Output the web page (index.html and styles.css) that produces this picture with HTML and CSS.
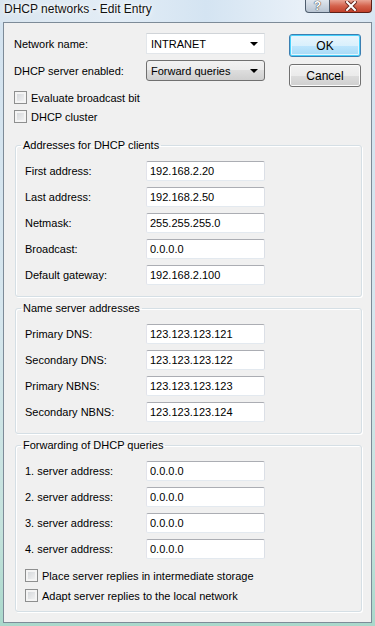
FILE: index.html
```html
<!DOCTYPE html>
<html lang="en">
  <head>
    <meta charset="UTF-8" />
    <title>DHCP networks - Edit Entry</title>
    <link rel="stylesheet" href="styles.css">
  </head>
  <body>
    <div class="window">
      <!-- Title bar -->
      <div class="titlebar">
        <span class="title">DHCP networks - Edit Entry</span>
        <div class="caption-btns">
          <span class="cap help">?</span>
          <span class="cap close">
            <svg width="12" height="10" viewBox="0 0 12 10">
              <path d="M2 1 L10 9 M10 1 L2 9" stroke="#6b2a20" stroke-width="4" stroke-linecap="square" />
              <path d="M2 1 L10 9 M10 1 L2 9" stroke="#fff" stroke-width="2" stroke-linecap="square" />
            </svg>
          </span>
        </div>
      </div>

      <!-- Dialog -->
      <div class="client">
        <div class="top">
          <div class="top-fields">
            <div class="row">
              <label class="lbl wide">Network name:</label>
              <div class="combo edit"><span>INTRANET</span><i class="arrow"></i></div>
            </div>
            <div class="row">
              <label class="lbl wide">DHCP server enabled:</label>
              <div class="combo list"><span>Forward queries</span><i class="arrow"></i></div>
            </div>
          </div>
          <div class="buttons">
            <button class="btn default">OK</button>
            <button class="btn">Cancel</button>
          </div>
        </div>

        <div class="checks">
          <div class="check"><span class="box"></span>Evaluate broadcast bit</div>
          <div class="check"><span class="box"></span>DHCP cluster</div>
        </div>

        <fieldset class="group first">
          <legend>Addresses for DHCP clients</legend>
          <div class="rows">
            <div class="row"><label class="lbl">First address:</label><input class="text" value="192.168.2.20" readonly></div>
            <div class="row"><label class="lbl">Last address:</label><input class="text" value="192.168.2.50" readonly></div>
            <div class="row"><label class="lbl">Netmask:</label><input class="text" value="255.255.255.0" readonly></div>
            <div class="row"><label class="lbl">Broadcast:</label><input class="text" value="0.0.0.0" readonly></div>
            <div class="row"><label class="lbl">Default gateway:</label><input class="text" value="192.168.2.100" readonly></div>
          </div>
        </fieldset>

        <fieldset class="group">
          <legend>Name server addresses</legend>
          <div class="rows">
            <div class="row"><label class="lbl">Primary DNS:</label><input class="text" value="123.123.123.121" readonly></div>
            <div class="row"><label class="lbl">Secondary DNS:</label><input class="text" value="123.123.123.122" readonly></div>
            <div class="row"><label class="lbl">Primary NBNS:</label><input class="text" value="123.123.123.123" readonly></div>
            <div class="row"><label class="lbl">Secondary NBNS:</label><input class="text" value="123.123.123.124" readonly></div>
          </div>
        </fieldset>

        <fieldset class="group last">
          <legend>Forwarding of DHCP queries</legend>
          <div class="rows">
            <div class="row"><label class="lbl">1. server address:</label><input class="text" value="0.0.0.0" readonly></div>
            <div class="row"><label class="lbl">2. server address:</label><input class="text" value="0.0.0.0" readonly></div>
            <div class="row"><label class="lbl">3. server address:</label><input class="text" value="0.0.0.0" readonly></div>
            <div class="row"><label class="lbl">4. server address:</label><input class="text" value="0.0.0.0" readonly></div>
          </div>
          <div class="checks inner">
            <div class="check"><span class="box"></span>Place server replies in intermediate storage</div>
            <div class="check"><span class="box"></span>Adapt server replies to the local network</div>
          </div>
        </fieldset>
      </div>
    </div>
  </body>
</html>
```

FILE: styles.css
```css
body {
  margin: 0;
  padding: 0;
  font-family: "Liberation Sans", Arial, sans-serif;
  font-size: 11px;
  color: #000;
}

/* Window frame */
.window {
  width: 375px;
  height: 626px;
  display: flex;
  flex-direction: column;
  background: linear-gradient(to bottom, #d4e3f0 0%, #d6e6ee 50%, #c4e2dc 85%, #a9d8cb 100%);
  overflow: hidden;
}

.titlebar {
  height: 22px;
  display: flex;
  align-items: flex-start;
  background: linear-gradient(to right, #d9e5ef 0%, #e3edf6 30%, #d4e4f2 55%, #e8f0f8 80%, #d8e6f2 100%);
}
.title {
  font-size: 12px;
  line-height: 19px;
  padding-left: 4px;
  color: #111;
  text-shadow: 0 0 6px #fff, 0 0 3px #fff;
}
.caption-btns {
  margin-left: auto;
  margin-right: 3px;
  display: flex;
}
.cap {
  height: 12px;
  border: 1px solid #4e5d6e;
  border-top: none;
  display: flex;
  align-items: center;
  justify-content: center;
}
.help {
  width: 23px;
  border-radius: 0 0 0 4px;
  background: linear-gradient(#dfe6ee, #b8c4d2);
  color: #fff;
  font-weight: bold;
  font-size: 12px;
  line-height: 12px;
  text-shadow: 0 0 1px #333, 0 0 1px #333;
}
.close {
  width: 41px;
  border-left: none;
  border-color: #5e1f16;
  border-radius: 0 0 4px 0;
  background: linear-gradient(#e9a595, #d4624c 50%, #c2402a);
}

/* Client area */
.client {
  flex: 1;
  margin: 0 3px 3px;
  border: 1px solid #7d8b98;
  background: #f0f0f0;
  padding: 10px 9px 0 10px;
}

.top {
  display: flex;
}
.top-fields {
  display: flex;
  flex-direction: column;
  gap: 6px;
}
.row {
  display: flex;
  align-items: center;
}
.lbl {
  width: 121px;
  flex-shrink: 0;
}
.lbl.wide {
  width: 132px;
}

.combo {
  width: 119px;
  height: 21px;
  box-sizing: border-box;
  display: flex;
  align-items: center;
  padding: 0 6px 0 4px;
}
.combo span {
  flex: 1;
}
.combo.edit {
  background: #fff;
  border: 1px solid #e2e6ea;
  border-top-color: #d0d4d8;
}
.combo.list {
  border: 1px solid #707070;
  border-radius: 3px;
  background: linear-gradient(#f2f2f2 0%, #ebebeb 50%, #dddddd 50%, #cfcfcf 100%);
}
.arrow {
  width: 0;
  height: 0;
  border-left: 4px solid transparent;
  border-right: 4px solid transparent;
  border-top: 4px solid #000;
}

.buttons {
  margin-left: auto;
  margin-right: 1px;
  margin-top: 1px;
  display: flex;
  flex-direction: column;
  gap: 7px;
}
.btn {
  width: 72px;
  height: 23px;
  font-family: "Liberation Sans", Arial, sans-serif;
  font-size: 12px;
  color: #000;
  border: 1px solid #707070;
  border-radius: 3px;
  background: linear-gradient(#f2f2f2 0%, #ebebeb 50%, #dddddd 50%, #cfcfcf 100%);
  box-shadow: inset 0 0 0 1px #fbfbfb;
  padding: 0;
}
.btn.default {
  border-color: #3c7fb1;
  background: linear-gradient(#eaf6fd 0%, #d9f0fc 50%, #bee6fd 50%, #a7d9f5 100%);
  box-shadow: inset 0 0 0 1px #48d1fc, inset 0 0 0 2px #e4f5fd;
}

/* Checkboxes */
.checks {
  display: flex;
  flex-direction: column;
  gap: 4px;
  margin-top: 3px;
}
.check {
  display: flex;
  align-items: center;
  height: 15px;
}
.box {
  width: 13px;
  height: 13px;
  box-sizing: border-box;
  border: 1px solid #8e8f8f;
  background: linear-gradient(135deg, #cfd2d6, #f7f7f7);
  box-shadow: inset 0 0 0 2px #f4f4f4;
  margin-right: 4px;
}
.checks.inner {
  margin-top: 9px;
  gap: 5px;
  padding-left: 9px;
}

/* Group boxes */
.group {
  margin: 4px 0 0 1px;
  padding: 0 0 11px;
  border: 1px solid #d5dfe5;
  border-radius: 3px;
  box-shadow: inset 1px 1px 0 #fff, 1px 1px 0 #fff;
}
.group.first {
  margin-top: 14px;
}
.group.last {
  padding-bottom: 8px;
}
.group legend {
  line-height: 14px;
  padding: 0 2px;
  margin-left: 5px;
}
.rows {
  display: flex;
  flex-direction: column;
  gap: 6px;
  padding: 9px 0 0 9px;
}
.text {
  width: 119px;
  height: 20px;
  box-sizing: border-box;
  margin: 0;
  padding: 0 3px;
  font-family: "Liberation Sans", Arial, sans-serif;
  font-size: 11px;
  color: #000;
  background: #fff;
  border: 1px solid;
  border-color: #abadb3 #dbdfe6 #e3e9ef #e2e3ea;
  border-radius: 2px;
  outline: none;
}
```
